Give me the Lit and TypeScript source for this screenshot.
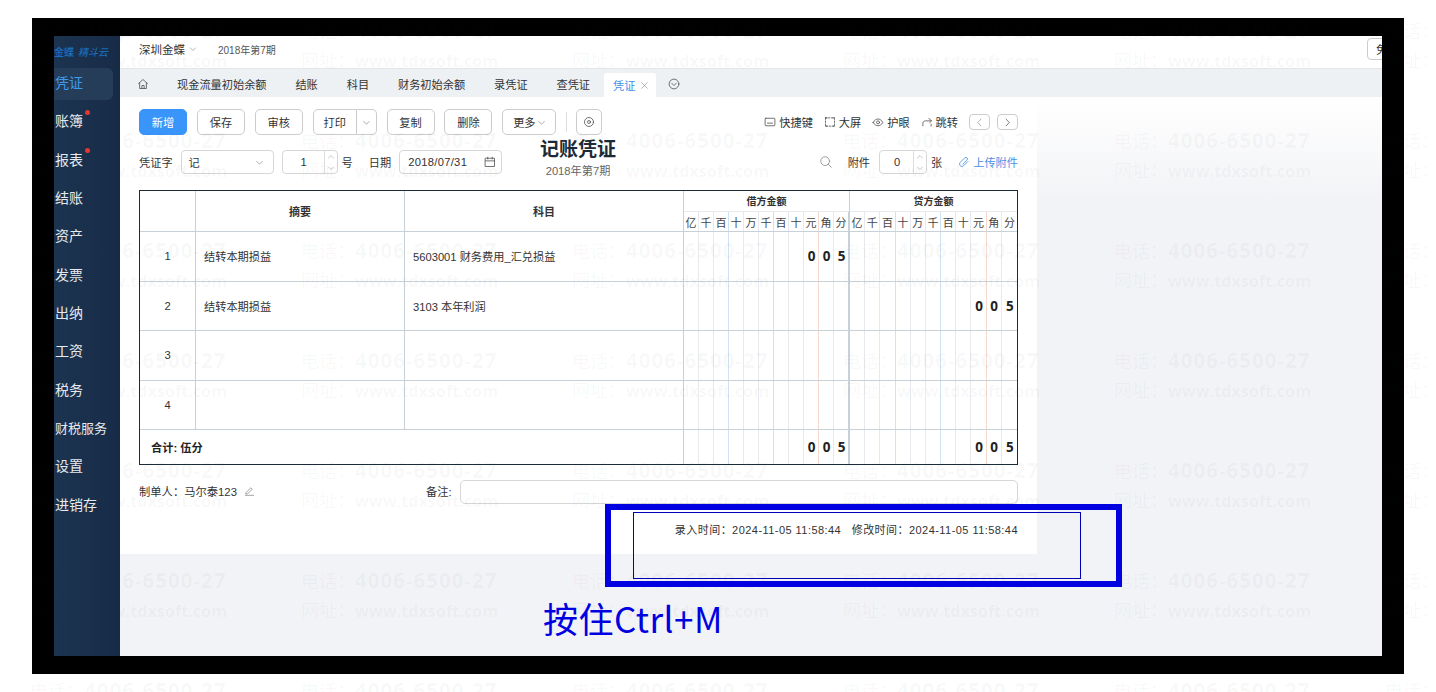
import { LitElement, html, css, svg } from "lit";
import { customElement } from "lit/decorators.js";

const NAV = [
  { t: "凭证", active: true },
  { t: "账簿", dot: true },
  { t: "报表", dot: true },
  { t: "结账" },
  { t: "资产" },
  { t: "发票" },
  { t: "出纳" },
  { t: "工资" },
  { t: "税务" },
  { t: "财税服务", small: true },
  { t: "设置" },
  { t: "进销存" },
];
const TABS = ["现金流量初始余额", "结账", "科目", "财务初始余额", "录凭证", "查凭证"];
const DIGITS = ["亿", "千", "百", "十", "万", "千", "百", "十", "元", "角", "分"];
const LINE = ["g", "g", "b", "g", "g", "b", "g", "g", "r", "g", "n"];

const ico = (w: number, body: unknown, color = "#555") => html`<svg width=${w} height=${w} viewBox="0 0 16 16" fill="none" stroke=${color} stroke-width="1.1" stroke-linecap="round" stroke-linejoin="round">${body}</svg>`;
const chevDown = (w = 10) => ico(w, svg`<path d="M3 6l5 5 5-5"/>`, "#777");

@customElement("app-root")
export class AppRoot extends LitElement {
  static styles = css`
    :host { display: block; position: relative; width: 1436px; height: 692px; overflow: hidden; background: #fff;
      font-family: "Liberation Sans", "Noto Sans CJK SC", sans-serif; color: #333; font-size: 11.2px; }
    .frame { margin: 18px 32px 0; width: 1372px; height: 656px; box-sizing: border-box; border: solid #000; border-width: 18px 22px; display: flex; overflow: hidden; background: #f2f3f6; position: relative; }
    .side { width: 66px; flex: none; background: linear-gradient(90deg, #1c3450, #172b47); display: flex; flex-direction: column; }
    .logo { height: 30px; margin-bottom: 2px; display: flex; align-items: center; color: #1c6fc0; font-size: 10px; white-space: nowrap; font-weight: 500; gap: 4px; }
    .logo i { font-style: italic; color: #1a6ab5; font-size: 10px; }
    .nav { display: flex; flex-direction: column; }
    .item { height: 32px; box-sizing: border-box; padding: 0 0 4px 1px; margin-bottom: 6.35px; display: flex; align-items: center; color: #e6eaee; font-size: 14px; position: relative; border-radius: 0 6px 6px 0; margin-right: 7px; white-space: nowrap; }
    .item.active { background: #263d5a; color: #3d9bf0; }
    .item.small { font-size: 13px; }
    .dot { position: absolute; left: 31px; top: 3.5px; width: 5px; height: 5px; border-radius: 50%; background: #e8352e; }
    .main { flex: 1; min-width: 0; display: flex; flex-direction: column; }
    .top { background: #fff; border-bottom: 1px solid #e3e6ea; border-top-left-radius: 8px; display: flex; align-items: center; padding: 0 0 6px 19px; flex: none; box-sizing: border-box; height: 33px; position: relative; }
    .company { display: flex; align-items: center; gap: 4px; color: #333; width: 79px; font-size: 11.5px; white-space: nowrap; }
    .period { font-size: 10px; color: #555; }
    .edge { position: absolute; right: -8px; top: 2px; width: 23px; height: 22px; border: 1px solid #ccc; border-radius: 4px; background: #fff; display: flex; align-items: center; padding-left: 8px; box-sizing: border-box; color: #333; overflow: hidden; }
    .tabs { height: 28px; box-sizing: border-box; padding: 2px 0 0 17px; background: #eef1f4; display: flex; align-items: center; flex: none; }
    .home { width: 40px; display: flex; }
    .tab { margin-right: 28.9px; white-space: nowrap; }
    .tab.on { margin: 0 0 0 -15px; align-self: flex-end; height: 24px; width: 52px; box-sizing: border-box; padding-left: 9px; background: #fff; color: #3e8ee8; display: flex; align-items: center; gap: 5px; border-radius: 3px 3px 0 0; }
    .after { margin-left: 12px; display: flex; }
    .body { flex: 1; background: linear-gradient(#fff, #f2f3f6 105px); display: flex; align-items: flex-start; }
    .panel { width: 917px; height: 457px; background: #fff; box-sizing: border-box; padding: 12px 19px 0; display: flex; flex-direction: column; }
    .tool { display: flex; align-items: flex-start; height: 27px; flex: none; }
    .btn { height: 26px; width: 48px; flex: none; box-sizing: border-box; border: 1px solid #ccc; border-radius: 5px; background: #fff; display: flex; align-items: center; justify-content: center; margin-right: 9.9px; white-space: nowrap; color: #333; }
    .btn.primary { background: #3a95fb; border-color: #3a95fb; color: #fff; }
    .btn.print { width: 44px; border-radius: 5px 0 0 5px; margin-right: 0; }
    .btn.drop { width: 20px; border-radius: 0 5px 5px 0; border-left: 0; }
    .btn.more { width: 54px; gap: 1px; }
    .btn.icon { width: 26px; margin-right: 0; }
    .vr { width: 1px; height: 20px; background: #ddd; margin: 3px 9px 0 0; }
    .spacer { flex: 1; }
    .links { display: flex; align-items: center; color: #333; height: 26px; }
    .link { display: inline-flex; align-items: center; gap: 3px; margin-right: 11px; white-space: nowrap; }
    .sq { width: 21px; height: 16px; box-sizing: border-box; border: 1px solid #ccc; border-radius: 4px; display: flex; align-items: center; justify-content: center; }
    .sq.next { margin-left: 7px; }
    .form { height: 40px; flex: none; position: relative; margin-top: 14px; }
    .f-row { display: flex; align-items: center; height: 24px; }
    .inp { height: 24px; box-sizing: border-box; border: 1px solid #d6d6d6; border-radius: 4px; display: flex; align-items: center; background: #fff; position: relative; flex: none; }
    .sel { width: 93px; margin-left: 8px; padding: 0 9px 0 7px; justify-content: space-between; }
    .num { width: 56px; margin-left: 8px; justify-content: center; padding-right: 12px; position: relative; }
    .spin { position: absolute; right: 0; top: 0; bottom: 0; width: 12px; border-left: 1px solid #ddd; display: flex; flex-direction: column; align-items: center; justify-content: space-around; }
    .date { width: 103px; margin-left: 8px; padding: 0 5px 0 8px; justify-content: space-between; letter-spacing: .3px; }
    .lbl { white-space: nowrap; }
    .lbl.gap4 { margin-left: 4px; }
    .lbl.gap16 { margin-left: 16px; }
    .lbl.gap15 { margin-left: 15px; }
    .num.att { width: 48px; margin-left: 9px; }
    .title { position: absolute; left: 401px; top: -13px; width: 76px; display: flex; flex-direction: column; align-items: center; }
    .title b { font-size: 19px; line-height: 26px; color: #1a2a36; white-space: nowrap; }
    .title span { font-size: 11.2px; line-height: 15px; margin-top: 1px; color: #666; white-space: nowrap; }
    .f-right { position: absolute; right: 0; top: 0; }
    .blue { color: #4a8fe8; display: inline-flex; align-items: center; gap: 3px; white-space: nowrap; margin-left: 16px; }
    .table { width: 879px; box-sizing: border-box; border: 1px solid #1b2b38; flex: none; background: #fff; }
    .row { display: grid; grid-template-columns: 56px 209px 279px 166px 167px; border-bottom: 1px solid #c8d0d8; height: 49.5px; box-sizing: border-box; }
    .row.head { height: 41px; font-weight: bold; font-size: 11px; color: #222; }
    .row.total { height: 34px; border-bottom: 0; grid-template-columns: 544px 166px 167px; }
    .c { border-right: 1px solid #c8d0d8; display: flex; align-items: center; padding-left: 8px; color: #333; min-width: 0; white-space: nowrap; }
    .c.center { justify-content: center; padding: 0; }
    .amt { display: flex; flex-direction: column; align-items: stretch; padding: 0; }
    .amt-t { height: 20px; line-height: 21px; text-align: center; border-bottom: 1px solid #e6eaee; font-size: 10px; }
    .dg { flex: 1; display: grid; grid-template-columns: repeat(11, 1fr); min-height: 0; }
    .d { display: flex; align-items: center; justify-content: center; font-weight: normal; font-size: 11px; color: #444; box-sizing: border-box; }
    .d.val { font-weight: bold; font-size: 13.5px; color: #222; padding-left: 1px; font-family: "Noto Sans", sans-serif; }
    .g { border-right: 1px solid #e6eaef; }
    .b { border-right: 1px solid #cfe2f4; }
    .r { border-right: 1px solid #f5d8ce; }
    .n { border-right: 1px solid #c8d0d8; }
    .amt.last .n { border-right: 0; }
    .amt.last { border-right: 0; }
    .tot { font-weight: bold; color: #222; padding-left: 11px; }
    .foot { display: flex; align-items: center; margin-top: 15px; height: 24px; flex: none; }
    .maker { width: 287px; display: flex; align-items: center; gap: 7px; white-space: nowrap; font-size: 11.3px; margin-bottom: 3px; }
    .foot .lbl { margin-bottom: 3px; }
    .note { flex: 1; height: 24px; margin-left: 9px; border: 1px solid #d6d6d6; border-radius: 5px; background: #fff; box-sizing: border-box; }
    .times { margin-top: 18px; text-align: right; font-size: 11px; letter-spacing: .45px; white-space: pre; color: #333; line-height: 16px; }
    .wm { position: absolute; inset: 0; pointer-events: none; display: grid; grid-template-columns: repeat(6, 271px); grid-auto-rows: 110px; padding: 16px 0 0 30px; overflow: hidden; z-index: 3; }
    .wm div { color: rgba(40, 50, 70, .04); font-size: 20.5px; letter-spacing: 1px; line-height: 28px; white-space: nowrap; font-weight: bold; font-family: "Open Sans", "Noto Sans CJK SC", sans-serif; }
    .wm span { font-weight: normal; font-size: 18px; letter-spacing: 0; }
    .wm em { font-style: normal; font-size: 16.2px; letter-spacing: 0; }
    .mark { position: absolute; box-sizing: border-box; border: 6px solid #0000e0; left: 605px; top: 504px; width: 517px; height: 83px; z-index: 4; }
    .mark2 { position: absolute; box-sizing: border-box; border: 1px solid #0000b4; left: 633px; top: 512px; width: 448px; height: 67px; z-index: 4; }
    .cap { position: absolute; left: 543px; top: 594px; font-size: 35px; letter-spacing: .5px; line-height: 48px; color: #0000e0; z-index: 4; font-family: "Noto Sans CJK SC", sans-serif; white-space: nowrap; }
  `;

  private amount(title: string, vals: string[], last = false) {
    return html`<div class="c amt ${last ? "last" : ""}">
      ${title ? html`<div class="amt-t">${title}</div>` : ""}
      <div class="dg">${DIGITS.map((d, i) => html`<div class="d ${LINE[i]} ${vals.length ? "val" : ""}">${title ? d : vals[i] ?? ""}</div>`)}</div>
    </div>`;
  }

  private dataRow(no: string, a: string, b: string, deb: string[], cre: string[]) {
    return html`<div class="row">
      <div class="c center">${no}</div>
      <div class="c">${a}</div>
      <div class="c">${b}</div>
      ${this.amount("", deb)}${this.amount("", cre, true)}
    </div>`;
  }

  render() {
    const v = ["", "", "", "", "", "", "", "", "0", "0", "5"];
    const spin = html`<div class="spin">${ico(8, svg`<path d="M3 10l5-5 5 5"/>`, "#999")}${ico(8, svg`<path d="M3 6l5 5 5-5"/>`, "#999")}</div>`;
    return html`
      <div class="frame">
        <aside class="side">
          <div class="logo"><span>金蝶</span><i>精斗云</i></div>
          <nav class="nav">
            ${NAV.map((n) => html`<div class="item ${n.active ? "active" : ""} ${n.small ? "small" : ""}">${n.t}${n.dot ? html`<span class="dot"></span>` : ""}</div>`)}
          </nav>
        </aside>
        <div class="main">
          <header class="top">
            <div class="company">深圳金蝶 ${chevDown(8)}</div>
            <div class="period">2018年第7期</div>
            <div class="edge">免</div>
          </header>
          <div class="tabs">
            <span class="home">${ico(12, svg`<path d="M2 7.500L8 2l6 5.500M3.500 6.500V14h9V6.500M6.500 14v-4h3v4"/>`)}</span>
            ${TABS.map((t) => html`<span class="tab">${t}</span>`)}
            <span class="tab on">凭证 ${ico(9, svg`<path d="M3 3l10 10M13 3L3 13"/>`, "#888")}</span>
            <span class="after">${ico(12, svg`<circle cx="8" cy="8" r="6.500"/><path d="M5 7l3 3 3-3"/>`)}</span>
          </div>
          <div class="body">
            <section class="panel">
              <div class="tool">
                <div class="btn primary">新增</div>
                <div class="btn">保存</div>
                <div class="btn">审核</div>
                <div class="btn print">打印</div>
                <div class="btn drop">${chevDown(9)}</div>
                <div class="btn">复制</div>
                <div class="btn">删除</div>
                <div class="btn more">更多 ${chevDown(9)}</div>
                <div class="vr"></div>
                <div class="btn icon">${ico(12, svg`<circle cx="8" cy="8" r="6"/><circle cx="8" cy="8" r="2"/>`)}</div>
                <div class="spacer"></div>
                <div class="links">
                  <span class="link">${ico(12, svg`<rect x="1.500" y="3" width="13" height="10" rx="1"/><path d="M4.500 9.500h7"/>`)}快捷键</span>
                  <span class="link">${ico(12, svg`<rect x="2" y="2.500" width="12" height="11" stroke-dasharray="2 2"/><path d="M2 2.500h2M12 2.500h2M2 13.500h2M12 13.500h2"/>`)}大屏</span>
                  <span class="link">${ico(12, svg`<path d="M1.500 8.500C3.500 5 6 4 8 4s4.500 1 6.500 4.500C12.500 12 10 13 8 13s-4.500-1-6.500-4.500z"/><circle cx="8" cy="8.500" r="2"/>`)}护眼</span>
                  <span class="link">${ico(12, svg`<path d="M2.500 13V9.500C2.500 7.500 4 6.500 6 6.500h7.500M10.500 3l3.500 3.500L11.500 9"/><path d="M13.500 11v2.500"/>`)}跳转</span>
                  <span class="sq">${ico(9, svg`<path d="M10.500 2L5 8l5.500 6"/>`, "#888")}</span>
                  <span class="sq next">${ico(9, svg`<path d="M5.500 2L11 8l-5.500 6"/>`, "#333")}</span>
                </div>
              </div>
              <div class="form">
                <div class="f-row">
                  <span class="lbl">凭证字</span>
                  <div class="inp sel"><span>记</span>${chevDown(9)}</div>
                  <div class="inp num">1${spin}</div>
                  <span class="lbl gap4">号</span>
                  <span class="lbl gap16">日期</span>
                  <div class="inp date"><span>2018/07/31</span>${ico(12, svg`<rect x="2" y="3" width="12" height="11"/><path d="M2 6.500h12M5 1.500V4M11 1.500V4"/>`)}</div>
                </div>
                <div class="title"><b>记账凭证</b><span>2018年第7期</span></div>
                <div class="f-row f-right">
                  ${ico(14, svg`<circle cx="7" cy="7" r="5"/><path d="M10.700 10.700L14 14"/>`, "#999")}
                  <span class="lbl gap15">附件</span>
                  <div class="inp num att">0${spin}</div>
                  <span class="lbl gap4">张</span>
                  <span class="blue">${ico(12, svg`<path d="M13 7.500l-5.500 5.500a3 3 0 0 1-4.500-4.500L9 2.500a2 2 0 0 1 3 3L6.500 11"/>`, "#4a8fe8")}上传附件</span>
                </div>
              </div>
              <div class="table">
                <div class="row head">
                  <div class="c center"></div>
                  <div class="c center">摘要</div>
                  <div class="c center">科目</div>
                  ${this.amount("借方金额", [])}
                  ${this.amount("贷方金额", [], true)}
                </div>
                ${this.dataRow("1", "结转本期损益", "5603001 财务费用_汇兑损益", v, [])}
                ${this.dataRow("2", "结转本期损益", "3103 本年利润", [], v)}
                ${this.dataRow("3", "", "", [], [])}
                ${this.dataRow("4", "", "", [], [])}
                <div class="row total">
                  <div class="c tot">合计: 伍分</div>
                  ${this.amount("", v)}${this.amount("", v, true)}
                </div>
              </div>
              <div class="foot">
                <div class="maker">制单人：马尔泰123 ${ico(11, svg`<path d="M3 11l7-7 2 2-7 7H3zM2 15h12"/>`, "#888")}</div>
                <span class="lbl">备注:</span>
                <div class="note"></div>
              </div>
              <div class="times">录入时间：2024-11-05 11:58:44   修改时间：2024-11-05 11:58:44</div>
            </section>
          </div>
        </div>
      </div>
      <div class="wm">
        ${Array.from({ length: 42 }, () => html`<div><span>电话：</span>4006-6500-27<br /><span>网址：</span><em>www.tdxsoft.com</em></div>`)}
      </div>
      <div class="mark"></div>
      <div class="mark2"></div>
      <div class="cap">按住Ctrl+M</div>
    `;
  }
}
